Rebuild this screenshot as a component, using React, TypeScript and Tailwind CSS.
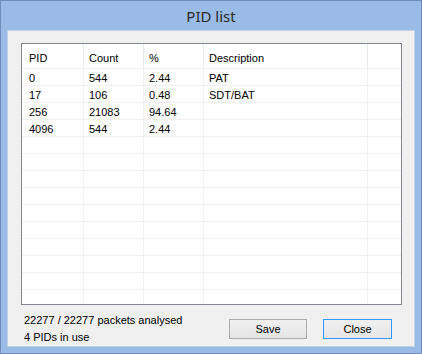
import React from "react";

const rows: [string, string, string, string][] = [
  ["0", "544", "2.44", "PAT"],
  ["17", "106", "0.48", "SDT/BAT"],
  ["256", "21083", "94.64", ""],
  ["4096", "544", "2.44", ""],
];

const empties = Array.from({ length: 11 });

export default function App() {
  const font = { fontFamily: '"Liberation Sans", Arial, sans-serif' };
  return (
    <div
      className="w-[422px] h-[354px] bg-[#99bbe6] border border-[#6f8db8] flex flex-col text-[11px] text-black"
      style={font}
    >
      <div
        className="h-[29px] flex items-center justify-center text-[15px] text-[#2b2b2b] pt-[1px]"
        style={{ fontFamily: '"Segoe UI", "Noto Sans", "Open Sans", sans-serif' }}
      >
        PID list
      </div>
      <div className="flex-1 mx-[6px] mb-[6px] border border-[#bfd2ea] bg-[#f0f0f0] flex flex-col">
        <div className="mt-[12px] ml-[13px] w-[381px] h-[262px] border border-[#828790] bg-white overflow-hidden">
          <div className="flex h-[25px] border-b border-[#f0f0f0]">
            <div className="w-[62px] pl-[7px] pt-[6px] border-r border-[#e5e9f0]">PID</div>
            <div className="w-[60px] pl-[5px] pt-[6px] border-r border-[#e5e9f0]">Count</div>
            <div className="w-[60px] pl-[5px] pt-[6px] border-r border-[#e5e9f0]">%</div>
            <div className="w-[164px] pl-[5px] pt-[6px] border-r border-[#e5e9f0]">Description</div>
            <div className="flex-1" />
          </div>
          {rows.map((r, i) => (
            <div key={i} className="flex h-[17px] leading-[16px] border-b border-[#f0f0f0]">
              <div className="w-[62px] pl-[7px] pt-[1px] border-r border-[#f0f0f0]">{r[0]}</div>
              <div className="w-[60px] pl-[5px] pt-[1px] border-r border-[#f0f0f0]">{r[1]}</div>
              <div className="w-[60px] pl-[5px] pt-[1px] border-r border-[#f0f0f0]">{r[2]}</div>
              <div className="w-[164px] pl-[5px] pt-[1px] border-r border-[#f0f0f0]">{r[3]}</div>
              <div className="flex-1" />
            </div>
          ))}
          {empties.map((_, i) => (
            <div key={i} className="flex h-[17px] border-b border-[#f0f0f0]">
              <div className="w-[62px] border-r border-[#f0f0f0]" />
              <div className="w-[60px] border-r border-[#f0f0f0]" />
              <div className="w-[60px] border-r border-[#f0f0f0]" />
              <div className="w-[164px] border-r border-[#f0f0f0]" />
              <div className="flex-1" />
            </div>
          ))}
        </div>
        <div className="flex mt-[7px]">
          <div className="pl-[16px] leading-[17px]">
            <div>22277 / 22277 packets analysed</div>
            <div>4 PIDs in use</div>
          </div>
          <div className="ml-auto mr-[22px] mt-[7px] flex gap-[16px]">
            <button className="w-[78px] h-[20px] border border-[#adadad] bg-gradient-to-b from-[#f0f0f0] to-[#e5e5e5] text-[11px] leading-[18px]">
              Save
            </button>
            <button className="w-[69px] h-[20px] border border-[#3399ff] bg-gradient-to-b from-[#f0f0f0] to-[#e5e5e5] text-[11px] leading-[18px]">
              Close
            </button>
          </div>
        </div>
      </div>
    </div>
  );
}
